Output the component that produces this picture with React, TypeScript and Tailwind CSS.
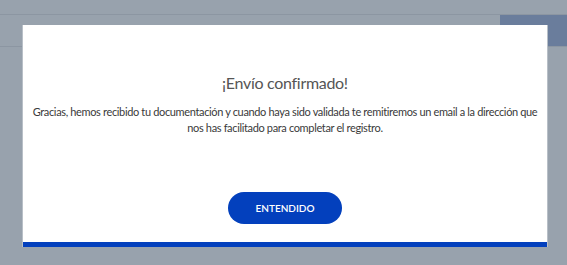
export default function App() {
  return (
    <div className="relative h-[265px] w-full overflow-hidden bg-[#98a2ad] font-['Lato',sans-serif]">
      {/* Page behind the overlay */}
      <div className="pt-[14px]">
        <div className="flex h-[33px] border-y border-[#8c96a2]">
          <div className="flex-1" />
          <div className="w-[67px] bg-[#6a7d9c]" />
        </div>
      </div>

      {/* Modal */}
      <div className="absolute left-[22px] top-[25px] flex h-[222px] w-[526px] flex-col items-center border-x border-[#b8bfc7] bg-white">
        <h2 className="mt-[46px] text-[16px] leading-[24px] tracking-[-0.3px] text-[#555]">
          ¡Envío confirmado!
        </h2>
        <p className="mt-[9px] whitespace-nowrap text-center text-[11px] leading-[16px] tracking-[-0.35px] text-[#3a3a3a]">
          Gracias, hemos recibido tu documentación y cuando haya sido validada te
          remitiremos un email a la dirección que
          <br />
          nos has facilitado para completar el registro.
        </p>
        <button className="mt-[56px] h-[32px] w-[114px] rounded-full bg-[#0340bd] text-[10px] font-semibold text-white">
          ENTENDIDO
        </button>
        <div className="mt-auto h-[5px] w-full bg-[#0340bd]" />
      </div>
    </div>
  );
}
